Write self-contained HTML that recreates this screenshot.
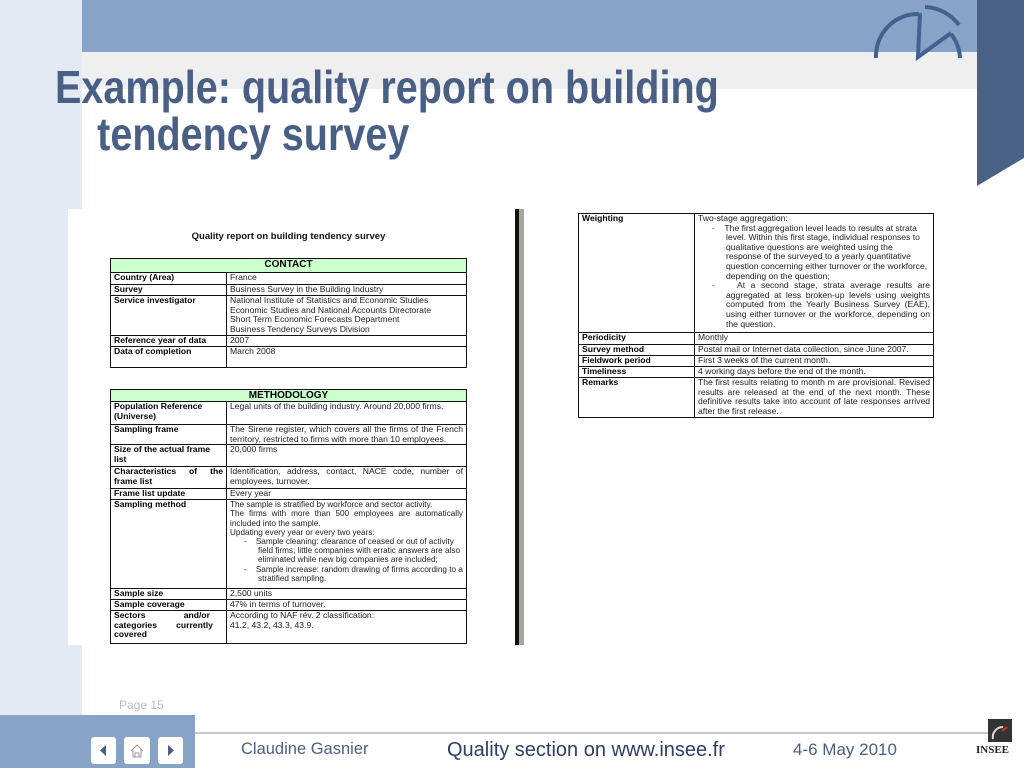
<!DOCTYPE html>
<html><head><meta charset="utf-8">
<style>
*{margin:0;padding:0;box-sizing:border-box}
body{width:1024px;height:768px;position:relative;overflow:hidden;background:#fff;font-family:"Liberation Sans",Arial,sans-serif}
.abs{position:absolute}
.t{position:absolute;border-collapse:collapse;table-layout:fixed;font-size:8.6px;line-height:9.6px;color:#222}
.t td{border:1px solid #111;vertical-align:top;padding:0 3px;overflow:hidden}
.t td.l{font-weight:bold;font-size:8.6px;color:#000}
.t td.h{background:#ccffcc;text-align:center;font-weight:bold;font-size:10px;line-height:11px;color:#000}
.j{text-align:justify}
.ind{padding-left:28px;text-indent:-14px;text-align:left}
.sm{font-size:8.2px;line-height:9.2px}
</style></head><body>
<div class="abs" style="left:0;top:0;width:82px;height:715px;background:#e3eaf3"></div>
<div class="abs" style="left:82px;top:0;width:895px;height:52px;background:#87a3c8"></div>
<div class="abs" style="left:82px;top:52px;width:895px;height:37px;background:#efefef"></div>
<svg class="abs" style="left:977px;top:0" width="47" height="186"><polygon points="0,0 47,0 47,158 0,186" fill="#4a6286"/></svg>
<svg class="abs" style="left:860px;top:0" width="117" height="70">
<g fill="none" stroke="#43618f" stroke-width="4" stroke-linecap="butt">
<path d="M16,58 A42,42 0 0 1 59,14"/>
<path d="M65,7 A44,44 0 0 1 99,25"/>
<path d="M60,13 L58,57 L91,33"/>
<path d="M91,34 A42,42 0 0 1 100,58"/>
</g></svg>
<div class="abs" style="left:55px;top:64px;font-weight:bold;font-size:46px;line-height:47px;color:#4a5f85;transform:scaleX(0.86);transform-origin:0 0;white-space:nowrap">Example: quality report on building<br><span style="padding-left:49px">tendency survey</span></div>

<div class="abs" style="left:68px;top:209px;width:447px;height:436px;background:#fff"></div>
<div class="abs" style="left:515px;top:209px;width:4px;height:436px;background:#111"></div>
<div class="abs" style="left:519px;top:209px;width:5px;height:436px;background:#a8a59e"></div>
<div class="abs" style="left:110px;top:231px;width:357px;text-align:center;font-weight:bold;font-size:9.5px;color:#111">Quality report on building tendency survey</div>

<table class="t" style="left:110px;top:258px;width:357px">
<col style="width:116px"><col>
<tr style="height:14px"><td class="h" colspan="2">CONTACT</td></tr>
<tr style="height:12px"><td class="l">Country (Area)</td><td>France</td></tr>
<tr style="height:11px"><td class="l">Survey</td><td>Business Survey in the Building Industry</td></tr>
<tr style="height:40px"><td class="l">Service investigator</td><td>National Institute of Statistics and Economic Studies<br>Economic Studies and National Accounts Directorate<br>Short Term Economic Forecasts Department<br>Business Tendency Surveys Division</td></tr>
<tr style="height:11px"><td class="l">Reference year of data</td><td>2007</td></tr>
<tr style="height:21px"><td class="l">Data of completion</td><td>March 2008</td></tr>
</table>

<table class="t" style="left:110px;top:389px;width:357px">
<col style="width:116px"><col>
<tr style="height:12px"><td class="h" colspan="2">METHODOLOGY</td></tr>
<tr style="height:23px"><td class="l">Population Reference (Universe)</td><td>Legal units of the building industry. Around 20,000 firms.</td></tr>
<tr style="height:20px"><td class="l">Sampling frame</td><td class="j">The Sirene register, which covers all the firms of the French territory, restricted to firms with more than 10 employees.</td></tr>
<tr style="height:22px"><td class="l">Size of the actual frame list</td><td>20,000 firms</td></tr>
<tr style="height:22px"><td class="l j">Characteristics of the frame list</td><td class="j">Identification, address, contact, NACE code, number of employees, turnover.</td></tr>
<tr style="height:11px"><td class="l">Frame list update</td><td>Every year</td></tr>
<tr style="height:89px"><td class="l">Sampling method</td><td class="j sm">The sample is stratified by workforce and sector activity.<br>The firms with more than 500 employees are automatically included into the sample.<br>Updating every year or every two years:<div class="ind">-&nbsp;&nbsp;&nbsp;&nbsp;Sample cleaning: clearance of ceased or out of activity field firms; little companies with erratic answers are also eliminated while new big companies are included;</div><div class="ind">-&nbsp;&nbsp;&nbsp;&nbsp;Sample increase: random drawing of firms according to a stratified sampling.</div></td></tr>
<tr style="height:11px"><td class="l">Sample size</td><td>2,500 units</td></tr>
<tr style="height:11px"><td class="l">Sample coverage</td><td>47% in terms of turnover.</td></tr>
<tr style="height:33px"><td class="l j">Sectors&nbsp;&nbsp;&nbsp;&nbsp;&nbsp;&nbsp;&nbsp;&nbsp;&nbsp;&nbsp;&nbsp;&nbsp;&nbsp;&nbsp;&nbsp;&nbsp;and/or<br>categories&nbsp;&nbsp;&nbsp;&nbsp;&nbsp;&nbsp;&nbsp;&nbsp;currently<br>covered</td><td>According to NAF rév. 2 classification:<br>41.2, 43.2, 43.3, 43.9.</td></tr>
</table>

<table class="t" style="left:578px;top:213px;width:356px">
<col style="width:116px"><col>
<tr style="height:119px"><td class="l">Weighting</td><td>Two-stage aggregation:<div class="ind">-&nbsp;&nbsp;&nbsp;&nbsp;The first aggregation level leads to results at strata level. Within this first stage, individual responses to qualitative questions are weighted using the response of the surveyed to a yearly quantitative question concerning either turnover or the workforce, depending on the question;</div><div class="ind j" style="text-align:justify">-&nbsp;&nbsp;&nbsp;&nbsp;At a second stage, strata average results are aggregated at less broken-up levels using weights computed from the Yearly Business Survey (EAE), using either turnover or the workforce, depending on the question.</div></td></tr>
<tr style="height:12px"><td class="l">Periodicity</td><td>Monthly</td></tr>
<tr style="height:11px"><td class="l">Survey method</td><td>Postal mail or Internet data collection, since June 2007.</td></tr>
<tr style="height:11px"><td class="l">Fieldwork period</td><td>First 3 weeks of the current month.</td></tr>
<tr style="height:11px"><td class="l">Timeliness</td><td>4 working days before the end of the month.</td></tr>
<tr style="height:40px"><td class="l">Remarks</td><td class="j">The first results relating to month m are provisional. Revised results are released at the end of the next month. These definitive results take into account of late responses arrived after the first release.</td></tr>
</table>

<div class="abs" style="left:119px;top:698px;font-size:12px;color:#b8bfca">Page 15</div>
<div class="abs" style="left:0;top:715px;width:195px;height:53px;background:#87a3c8"></div>
<div class="abs" style="left:195px;top:732px;width:795px;height:2px;background:#c8c8c8"></div>
<div class="abs" style="left:91px;top:737px;width:25px;height:27px;background:#fff;border-radius:3px"><svg width="25" height="27"><polygon points="15,8 15,19 9,13.5" fill="#4a5f85"/></svg></div>
<div class="abs" style="left:124px;top:737px;width:26px;height:27px;background:#fff;border-radius:3px"><svg width="26" height="27"><path d="M7,14 L13,8 L19,14 M9,12 V20 H17 V12 M11,20 V16 H15 V20" fill="none" stroke="#999" stroke-width="1"/></svg></div>
<div class="abs" style="left:158px;top:737px;width:25px;height:27px;background:#fff;border-radius:3px"><svg width="25" height="27"><polygon points="10,8 10,19 16,13.5" fill="#4a5f85"/></svg></div>
<div class="abs" style="left:241px;top:740px;font-size:16.5px;color:#4a5f85;white-space:nowrap">Claudine Gasnier</div>
<div class="abs" style="left:447px;top:739px;font-size:20px;color:#2d3f66;white-space:nowrap">Quality section on www.insee.fr</div>
<div class="abs" style="left:793px;top:740px;font-size:17px;color:#4a5f85;white-space:nowrap">4-6 May 2010</div>
<div class="abs" style="left:988px;top:719px;width:24px;height:23px;background:#333"><svg width="24" height="23"><path d="M5,20 A10,10 0 0 1 15,8" fill="none" stroke="#ddd" stroke-width="2"/><path d="M14,12 L19,8" stroke="#c33" stroke-width="2"/></svg></div>
<div class="abs" style="left:976px;top:744px;font-size:11px;font-weight:bold;color:#222;font-family:'Liberation Serif',serif">INSEE</div>
</body></html>
